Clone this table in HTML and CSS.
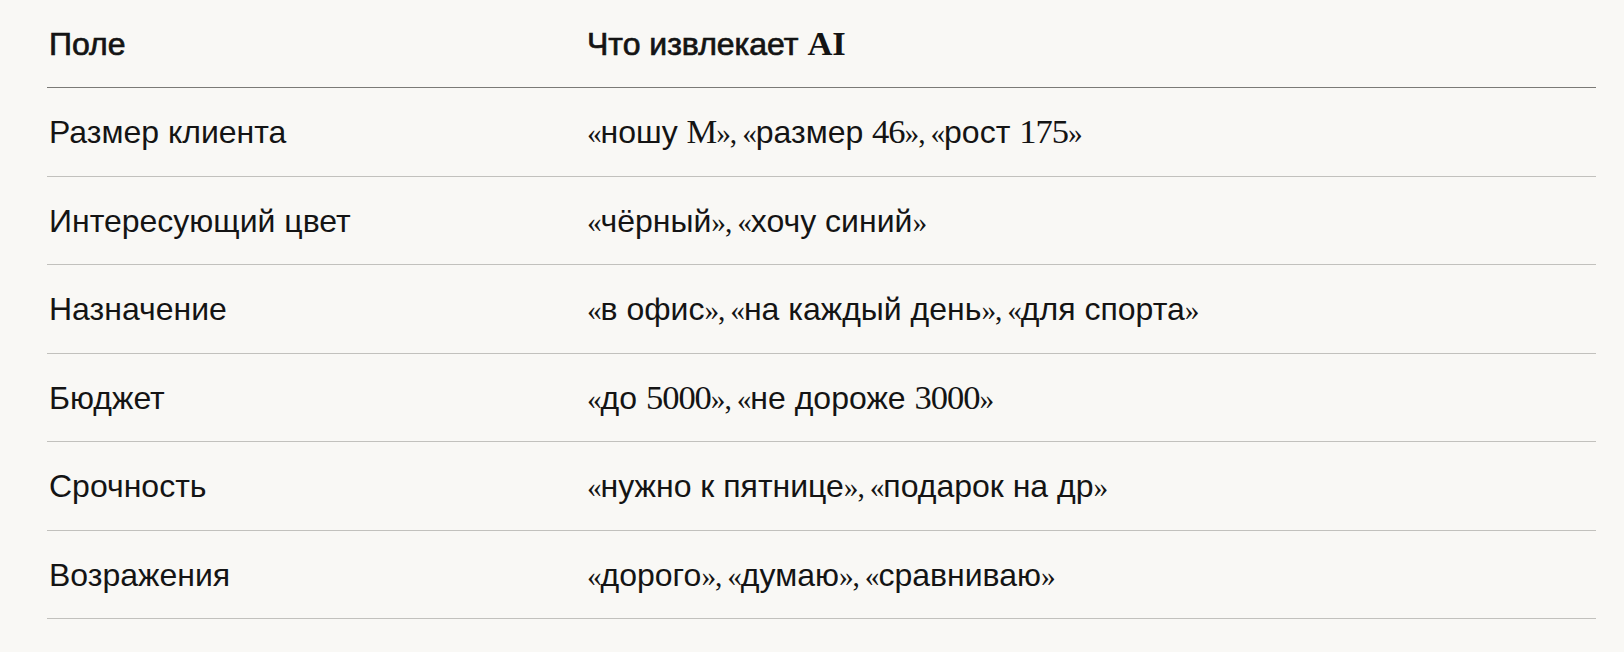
FILE: index.html
```html
<!DOCTYPE html>
<html lang="ru">
<head>
<meta charset="utf-8">
<title>Поля</title>
<link rel="stylesheet" href="styles.css">
</head>
<body>
<div class="table">
  <div class="row head">
    <div class="cell">Поле</div>
    <div class="cell">Что извлекает <span class="lat">AI</span></div>
  </div>
  <div class="row">
    <div class="cell">Размер клиента</div>
    <div class="cell"><span class="q">«</span>ношу <span class="lat">M</span><span class="q">», «</span>размер <span class="lat">46</span><span class="q">», «</span>рост <span class="lat">175</span><span class="q">»</span></div>
  </div>
  <div class="row">
    <div class="cell">Интересующий цвет</div>
    <div class="cell"><span class="q">«</span>чёрный<span class="q">», «</span>хочу синий<span class="q">»</span></div>
  </div>
  <div class="row">
    <div class="cell">Назначение</div>
    <div class="cell"><span class="q">«</span>в офис<span class="q">», «</span>на каждый день<span class="q">», «</span>для спорта<span class="q">»</span></div>
  </div>
  <div class="row">
    <div class="cell">Бюджет</div>
    <div class="cell"><span class="q">«</span>до <span class="lat">5000</span><span class="q">», «</span>не дороже <span class="lat">3000</span><span class="q">»</span></div>
  </div>
  <div class="row">
    <div class="cell">Срочность</div>
    <div class="cell"><span class="q">«</span>нужно к пятнице<span class="q">», «</span>подарок на др<span class="q">»</span></div>
  </div>
  <div class="row">
    <div class="cell">Возражения</div>
    <div class="cell"><span class="q">«</span>дорого<span class="q">», «</span>думаю<span class="q">», «</span>сравниваю<span class="q">»</span></div>
  </div>
</div>
</body>
</html>
```

FILE: styles.css
```css
html, body {
  margin: 0;
  padding: 0;
  background: #f9f8f5;
}
body {
  font-family: "Liberation Sans", Arial, sans-serif;
  font-size: 32px;
  line-height: 40px;
  color: #141414;
}
.table {
  margin: 0 28px 0 47px;
  display: flex;
  flex-direction: column;
}
.row {
  display: grid;
  grid-template-columns: 540px 1fr;
  padding: 24px 0 23.5px;
  border-bottom: 1px solid #c2c1bd;
}
.row.head {
  padding: 23.5px 0 23.5px;
  border-bottom-color: #7b7a76;
  -webkit-text-stroke: 0.7px currentColor;
}
.cell {
  white-space: nowrap;
}
.cell:first-child {
  padding-left: 2px;
}
.lat,
.q {
  font-family: "Liberation Serif", "Times New Roman", serif;
  line-height: 1;
}
.lat {
  font-size: 1.08em;
  letter-spacing: -0.03em;
}
.q {
  font-size: 0.92em;
  letter-spacing: -0.04em;
}
.head .lat {
  font-weight: 700;
  letter-spacing: 0;
  -webkit-text-stroke: 0;
}
```
